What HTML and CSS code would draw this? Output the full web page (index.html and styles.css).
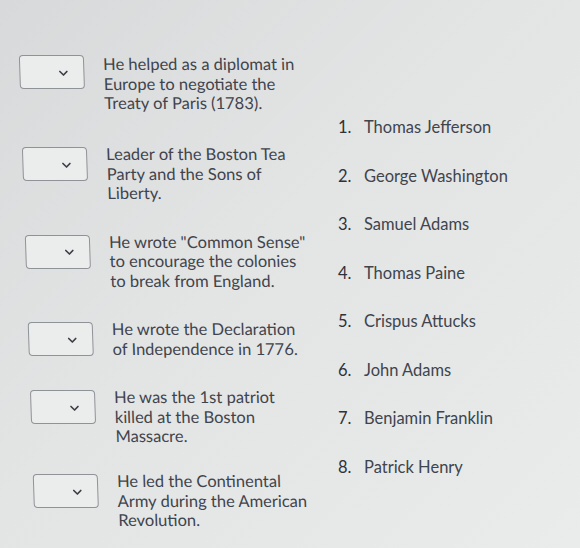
FILE: index.html
```html
<!DOCTYPE html>
<html>
<head>
<meta charset="utf-8">
<link rel="stylesheet" href="styles.css">
</head>
<body>
<div class="page">
  <div class="left">
    <div class="row">
      <div class="select"><svg class="chev" width="10" height="7" viewBox="0 0 10 7"><path d="M1.5 1.5 L5 5 L8.5 1.5" fill="none" stroke="#3c3f45" stroke-width="1.7" stroke-linecap="round" stroke-linejoin="round"/></svg></div>
      <div class="desc">He helped as a diplomat in<br>Europe to negotiate the<br>Treaty of Paris (1783).</div>
    </div>
    <div class="row">
      <div class="select"><svg class="chev" width="10" height="7" viewBox="0 0 10 7"><path d="M1.5 1.5 L5 5 L8.5 1.5" fill="none" stroke="#3c3f45" stroke-width="1.7" stroke-linecap="round" stroke-linejoin="round"/></svg></div>
      <div class="desc">Leader of the Boston Tea<br>Party and the Sons of<br>Liberty.</div>
    </div>
    <div class="row">
      <div class="select"><svg class="chev" width="10" height="7" viewBox="0 0 10 7"><path d="M1.5 1.5 L5 5 L8.5 1.5" fill="none" stroke="#3c3f45" stroke-width="1.7" stroke-linecap="round" stroke-linejoin="round"/></svg></div>
      <div class="desc">He wrote "Common Sense"<br>to encourage the colonies<br>to break from England.</div>
    </div>
    <div class="row">
      <div class="select"><svg class="chev" width="10" height="7" viewBox="0 0 10 7"><path d="M1.5 1.5 L5 5 L8.5 1.5" fill="none" stroke="#3c3f45" stroke-width="1.7" stroke-linecap="round" stroke-linejoin="round"/></svg></div>
      <div class="desc">He wrote the Declaration<br>of Independence in 1776.</div>
    </div>
    <div class="row">
      <div class="select"><svg class="chev" width="10" height="7" viewBox="0 0 10 7"><path d="M1.5 1.5 L5 5 L8.5 1.5" fill="none" stroke="#3c3f45" stroke-width="1.7" stroke-linecap="round" stroke-linejoin="round"/></svg></div>
      <div class="desc">He was the 1st patriot<br>killed at the Boston<br>Massacre.</div>
    </div>
    <div class="row">
      <div class="select"><svg class="chev" width="10" height="7" viewBox="0 0 10 7"><path d="M1.5 1.5 L5 5 L8.5 1.5" fill="none" stroke="#3c3f45" stroke-width="1.7" stroke-linecap="round" stroke-linejoin="round"/></svg></div>
      <div class="desc">He led the Continental<br>Army during the American<br>Revolution.</div>
    </div>
  </div>
  <ol class="right">
    <li><span class="num">1.</span><span class="name">Thomas Jefferson</span></li>
    <li><span class="num">2.</span><span class="name">George Washington</span></li>
    <li><span class="num">3.</span><span class="name">Samuel Adams</span></li>
    <li><span class="num">4.</span><span class="name">Thomas Paine</span></li>
    <li><span class="num">5.</span><span class="name">Crispus Attucks</span></li>
    <li><span class="num">6.</span><span class="name">John Adams</span></li>
    <li><span class="num">7.</span><span class="name">Benjamin Franklin</span></li>
    <li><span class="num">8.</span><span class="name">Patrick Henry</span></li>
  </ol>
</div>
</body>
</html>
```
FILE: styles.css
```css
html, body {
  margin: 0;
  padding: 0;
}
body {
  width: 580px;
  height: 548px;
  overflow: hidden;
  font-family: Lato, "Open Sans", sans-serif;
  font-size: 16.5px;
  color: #40444d;
  background: linear-gradient(135deg, #d8d9da 0%, #e3e4e4 45%, #e9ecea 100%);
}
.page {
  display: flex;
  height: 548px;
}
.left {
  width: 320px;
  box-sizing: border-box;
  padding: 55px 0 0 17px;
  transform: skewX(1.9deg);
  transform-origin: top left;
}
.row {
  display: flex;
  gap: 19px;
  margin-bottom: 29px;
}
.row:nth-child(1) { margin-bottom: 31.5px; }
.row:nth-child(5) { margin-bottom: 25.5px; }
.select {
  width: 65px;
  height: 34px;
  margin-top: 2px;
  box-sizing: border-box;
  border: 1.5px solid #8f9398;
  border-radius: 4px;
  background: #ebecec;
  display: flex;
  align-items: center;
  justify-content: flex-end;
  padding: 2px 15px 0 0;
  flex: none;
}
.row:nth-child(1) .select { margin-top: 0; }
.chev {
  display: block;
}
.desc {
  white-space: nowrap;
  line-height: 19.5px;
}
.right {
  list-style: none;
  margin: 0;
  padding: 117px 0 0 18px;
  display: flex;
  flex-direction: column;
  gap: 28.5px;
}
.right li {
  display: flex;
  line-height: 20px;
}
.num {
  width: 26px;
  color: #2f3238;
}
.name {
  color: #40444d;
}
```
